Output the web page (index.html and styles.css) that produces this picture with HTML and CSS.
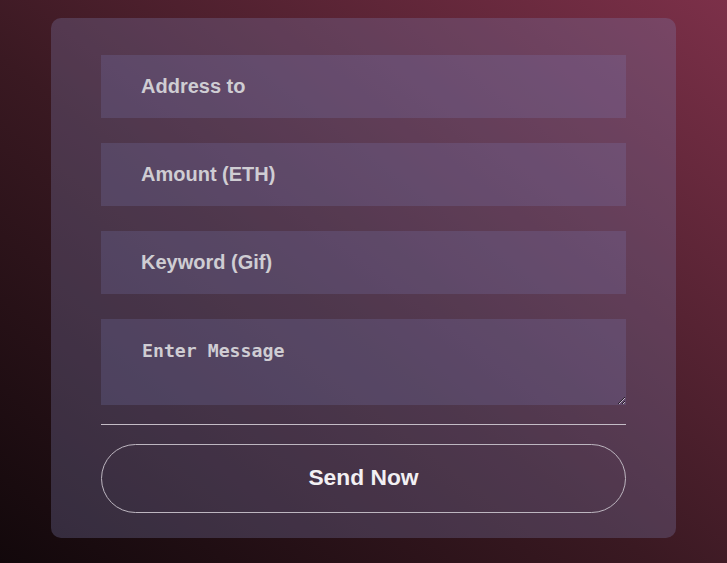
FILE: index.html
```html
<!DOCTYPE html>
<html>
<head>
<meta charset="utf-8">
<link rel="stylesheet" href="styles.css">
</head>
<body>
<div class="page">
  <form class="card">
    <input class="field" type="text" placeholder="Address to">
    <input class="field" type="text" placeholder="Amount (ETH)">
    <input class="field" type="text" placeholder="Keyword (Gif)">
    <textarea class="field message" placeholder="Enter Message"></textarea>
    <div class="divider"></div>
    <button class="send" type="button">Send Now</button>
  </form>
</div>
</body>
</html>
```
FILE: styles.css
```css
html, body {
  margin: 0;
  padding: 0;
  height: 100%;
}
body {
  background: linear-gradient(to top right, #12080b 0%, #3a1922 45%, #7c3049 100%);
  font-family: "Liberation Sans", Arial, sans-serif;
  overflow: hidden;
}
.page {
  padding: 18px 51px 0;
}
.card {
  box-sizing: border-box;
  width: 625px;
  height: 520px;
  padding: 37px 50px 25px;
  border-radius: 10px;
  background: rgba(125, 125, 175, 0.3);
  display: flex;
  flex-direction: column;
}
.field {
  box-sizing: border-box;
  width: 525px;
  height: 63px;
  flex: none;
  margin: 0 0 25px;
  padding: 0 0 0 40px;
  border: none;
  outline: none;
  border-radius: 0;
  background: rgba(130, 135, 200, 0.2);
  color: #fff;
  font-family: "Liberation Sans", Arial, sans-serif;
  font-weight: bold;
  font-size: 20px;
}
.field::placeholder {
  color: #cfcdd3;
  opacity: 1;
}
.message {
  height: 86px;
  margin-bottom: 19px;
  padding: 21px 0 0 41px;
  font-family: "DejaVu Sans Mono", monospace;
  font-size: 18.2px;
  line-height: 22px;
  resize: vertical;
}
.divider {
  height: 1px;
  flex: none;
  background: #c4bcc6;
  margin-bottom: 19px;
}
.send {
  box-sizing: border-box;
  width: 525px;
  height: 69px;
  flex: none;
  padding: 0 0 2px;
  border: 1px solid #bdb6c0;
  border-radius: 35px;
  background: transparent;
  color: #f2f0f3;
  font-family: "Liberation Sans", Arial, sans-serif;
  font-weight: bold;
  font-size: 22.8px;
  cursor: pointer;
}
```
